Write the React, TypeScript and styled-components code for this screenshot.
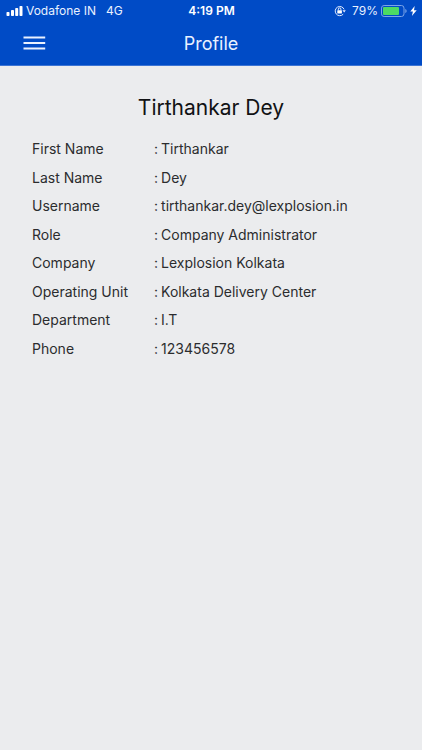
import React from "react";
import styled, { createGlobalStyle } from "styled-components";

const GlobalStyle = createGlobalStyle`
  * { box-sizing: border-box; }
  body {
    margin: 0;
    background: #ebecee;
    color: #2b2c2e;
    font-family: Inter, "Liberation Sans", sans-serif;
  }
`;

const Page = styled.div`
  min-height: 100vh;
  background: #ebecee;
`;

const Header = styled.header`
  background: #004bc6;
  color: #e9f1ff;
  border-bottom: 1px solid #3c74d4;
`;

const StatusBar = styled.div`
  display: grid;
  grid-template-columns: 1fr auto 1fr;
  align-items: center;
  height: 22px;
  padding: 0 5px 0 6px;
  font-size: 12px;
  line-height: 16px;
  white-space: nowrap;
`;

const Carrier = styled.div`
  display: flex;
  align-items: center;
  gap: 3px;
`;

const Network = styled.span`
  margin-left: 7px;
`;

const Clock = styled.time`
  font-weight: 600;
  color: #ffffff;
`;

const Battery = styled.div`
  display: flex;
  align-items: center;
  justify-content: flex-end;
  gap: 3px;
`;

const LockIcon = styled.svg`
  margin-right: 3px;
`;

const TitleBar = styled.div`
  display: grid;
  grid-template-columns: 1fr auto 1fr;
  align-items: center;
  height: 43px;
  padding: 0 23px;
`;

const MenuButton = styled.button`
  display: flex;
  justify-self: start;
  padding: 6px 0 8px;
  border: 0;
  background: none;
  color: inherit;
  cursor: pointer;
`;

const Title = styled.h1`
  margin: 0;
  font-size: 18px;
  line-height: 24px;
  font-weight: 400;
`;

const Content = styled.main`
  padding: 28px 32px;
`;

const Name = styled.h2`
  margin: 0 0 13px;
  color: #111214;
  font-size: 21px;
  line-height: 28px;
  font-weight: 400;
  text-align: center;
`;

const Details = styled.dl`
  display: grid;
  grid-auto-rows: 1fr;
  min-height: 228px;
  margin: 0;
  font-size: 14px;
  line-height: 20px;
`;

const Row = styled.div`
  display: grid;
  grid-template-columns: 122px 1fr;
  align-items: center;
`;

const Label = styled.dt``;

const Value = styled.dd`
  display: flex;
  gap: 3px;
  margin: 0;
  min-width: 0;
  overflow-wrap: anywhere;

  &::before {
    content: ":";
  }
`;

const fields = [
  ["First Name", "Tirthankar"],
  ["Last Name", "Dey"],
  ["Username", "tirthankar.dey@lexplosion.in"],
  ["Role", "Company Administrator"],
  ["Company", "Lexplosion Kolkata"],
  ["Operating Unit", "Kolkata Delivery Center"],
  ["Department", "I.T"],
  ["Phone", "123456578"],
];

export default function App() {
  return (
    <Page>
      <GlobalStyle />
      <Header>
        <StatusBar>
          <Carrier>
            <svg width="17" height="10" viewBox="0 0 17 10" fill="#fff" aria-hidden="true">
              <rect x="0.5" y="6" width="3" height="4" rx="0.8" />
              <rect x="5" y="4" width="3" height="6" rx="0.8" />
              <rect x="9.2" y="2" width="3" height="8" rx="0.8" />
              <rect x="13.5" y="0" width="3" height="10" rx="0.8" />
            </svg>
            <span>Vodafone IN</span>
            <Network>4G</Network>
          </Carrier>
          <Clock>4:19 PM</Clock>
          <Battery>
            <LockIcon width="12" height="12" viewBox="0 0 12 12" fill="none" aria-hidden="true">
              <path d="M9.2 9.2A4.6 4.6 0 1 1 10.1 4.4" stroke="#e4edff" strokeWidth="1" />
              <path d="M8.4 5.2h3.4L10.2 7.6z" fill="#e4edff" />
              <rect x="3.3" y="5.2" width="4.6" height="3.4" rx="0.5" fill="#fff" />
              <path d="M4.3 5.3V4.2a1.3 1.3 0 0 1 2.6 0v1.1" stroke="#fff" strokeWidth="0.9" />
            </LockIcon>
            <span>79%</span>
            <svg width="26" height="12" viewBox="0 0 26 12" fill="none" aria-hidden="true">
              <rect x="0.5" y="0.5" width="22.5" height="11" rx="2.6" stroke="#7ba5e8" />
              <rect x="2" y="2" width="16" height="8" rx="1" fill="#4cda64" />
              <path d="M24.3 4v4c.8-.3 1.3-1 1.3-2s-.5-1.7-1.3-2z" fill="#7ba5e8" />
            </svg>
            <svg width="7" height="10" viewBox="0 0 7 10" fill="#fff" aria-hidden="true">
              <path d="M4.7 0L0.3 5.6h2.6L1.9 10 6.7 4.2H4z" />
            </svg>
          </Battery>
        </StatusBar>
        <TitleBar>
          <MenuButton type="button" aria-label="Open menu">
            <svg width="23" height="14" viewBox="0 0 23 14" fill="currentColor" aria-hidden="true">
              <rect x="0.5" y="0.5" width="21.7" height="2" />
              <rect x="0.5" y="6" width="21.7" height="2" />
              <rect x="0.5" y="11.5" width="21.7" height="2" />
            </svg>
          </MenuButton>
          <Title>Profile</Title>
        </TitleBar>
      </Header>
      <Content>
        <Name>Tirthankar Dey</Name>
        <Details>
          {fields.map(([label, value]) => (
            <Row key={label}>
              <Label>{label}</Label>
              <Value>{value}</Value>
            </Row>
          ))}
        </Details>
      </Content>
    </Page>
  );
}
